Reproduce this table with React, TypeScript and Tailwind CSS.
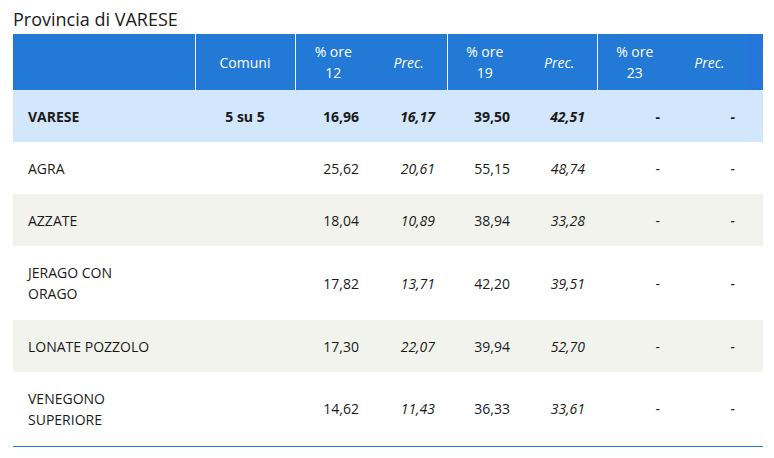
type Row = {
  name: string[];
  comuni?: string;
  vals: [string, string, string, string, string, string];
  total?: boolean;
};

const rows: Row[] = [
  { name: ["VARESE"], comuni: "5 su 5", vals: ["16,96", "16,17", "39,50", "42,51", "-", "-"], total: true },
  { name: ["AGRA"], vals: ["25,62", "20,61", "55,15", "48,74", "-", "-"] },
  { name: ["AZZATE"], vals: ["18,04", "10,89", "38,94", "33,28", "-", "-"] },
  { name: ["JERAGO CON", "ORAGO"], vals: ["17,82", "13,71", "42,20", "39,51", "-", "-"] },
  { name: ["LONATE POZZOLO"], vals: ["17,30", "22,07", "39,94", "52,70", "-", "-"] },
  { name: ["VENEGONO", "SUPERIORE"], vals: ["14,62", "11,43", "36,33", "33,61", "-", "-"] },
];

function rowBg(r: Row, i: number) {
  if (r.total) return "bg-[#d2e6fc]";
  // zebra: even data rows are beige
  return i % 2 === 0 ? "bg-[#f3f3ee]" : "bg-white";
}

export default function App() {
  return (
    <div className="w-[774px] h-[458px] bg-white px-[13px] pt-[6px] font-['Open_Sans',sans-serif] text-[#1a1a1a]">
      <h2 className="text-[18px] leading-[26px] mb-[2px] text-[#1a1a1a]">Provincia di VARESE</h2>
      <table className="table-fixed border-collapse w-[750px] text-[14px] border-b border-[#2a7ad6]">
        <colgroup>
          <col className="w-[182px]" />
          <col className="w-[100px]" />
          <col className="w-[76px]" />
          <col className="w-[76px]" />
          <col className="w-[75px]" />
          <col className="w-[75px]" />
          <col className="w-[75px]" />
          <col className="w-[75px]" />
          <col className="w-[16px]" />
        </colgroup>
        <thead>
          <tr className="h-[56px] bg-[#2279d6] text-white leading-[21px]">
            <th className="border-r border-white" />
            <th className="font-normal text-center border-r border-white">Comuni</th>
            <th className="font-normal text-center">
              % ore
              <br />
              12
            </th>
            <th className="font-normal italic text-center border-r border-white">Prec.</th>
            <th className="font-normal text-center">
              % ore
              <br />
              19
            </th>
            <th className="font-normal italic text-center border-r border-white">Prec.</th>
            <th className="font-normal text-center">
              % ore
              <br />
              23
            </th>
            <th className="font-normal italic text-center">Prec.</th>
            <th className="bg-[#2675da]" />
          </tr>
        </thead>
        <tbody>
          {rows.map((r, i) => (
            <tr
              key={r.name.join(" ")}
              className={`${rowBg(r, i)} ${r.name.length > 1 ? "h-[74px]" : "h-[52px]"} leading-[21px] ${r.total ? "font-bold" : ""}`}
            >
              <td className="pl-[15px] align-middle">
                {r.name.map((n) => (
                  <div key={n}>{n}</div>
                ))}
              </td>
              <td className="text-center">{r.comuni ?? ""}</td>
              {r.vals.map((v, j) => (
                <td key={j} className={`text-right pr-[12px] ${j % 2 === 1 ? "italic" : ""}`}>
                  {v}
                </td>
              ))}
              <td />
            </tr>
          ))}
        </tbody>
      </table>
    </div>
  );
}
